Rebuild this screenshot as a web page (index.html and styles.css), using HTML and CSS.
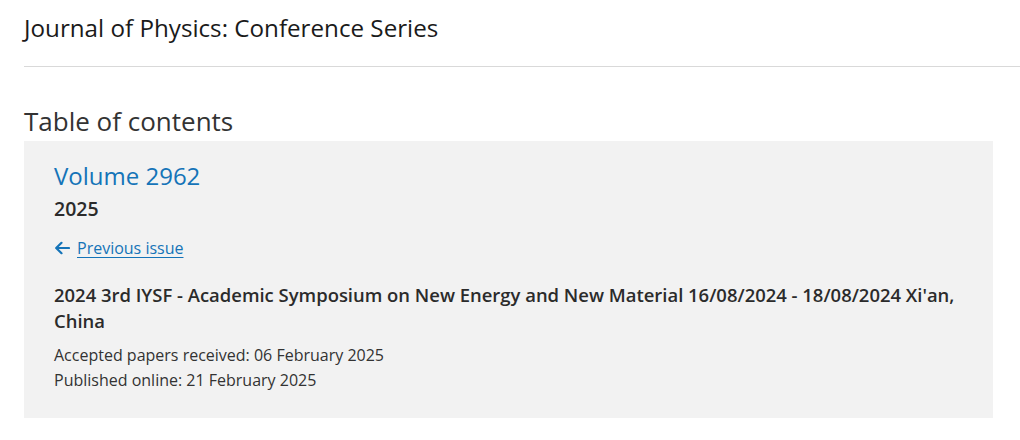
FILE: index.html
```html
<!DOCTYPE html>
<html lang="en">
<head>
<meta charset="utf-8">
<title>Journal of Physics: Conference Series</title>
<link rel="stylesheet" href="styles.css">
</head>
<body>
<header class="journal-header">
  <h1 class="journal-title">Journal of Physics: Conference Series</h1>
</header>
<main class="toc">
  <h2 class="toc-heading">Table of contents</h2>
  <section class="issue-box">
    <h3 class="volume">Volume 2962</h3>
    <p class="year">2025</p>
    <nav class="issue-nav">
      <svg class="arrow" width="16" height="14" viewBox="0 0 16 14" aria-hidden="true">
        <path d="M15 7H2.5M7.5 1.8L2.2 7l5.3 5.2" fill="none" stroke="#1574b8" stroke-width="2.2" stroke-linecap="round" stroke-linejoin="round"/>
      </svg>
      <a href="#" class="prev-link">Previous issue</a>
    </nav>
    <h4 class="conf-title">2024 3rd IYSF - Academic Symposium on New Energy and New Material 16/08/2024 - 18/08/2024 Xi'an, China</h4>
    <p class="meta">Accepted papers received: 06 February 2025<br>Published online: 21 February 2025</p>
  </section>
</main>
</body>
</html>
```
FILE: styles.css
```css
html, body {
  margin: 0;
  padding: 0;
  background: #ffffff;
}
body {
  font-family: "Open Sans", "Noto Sans", "Liberation Sans", sans-serif;
  color: #1a1a1a;
  width: 1020px;
  overflow: hidden;
}
.journal-header {
  margin-left: 24px;
  border-bottom: 1px solid #d9d9d9;
  height: 67px;
  box-sizing: border-box;
}
.journal-title {
  margin: 0;
  padding-top: 11px;
  font-weight: 400;
  font-size: 24.2px;
  line-height: 34px;
  color: #1a1a1a;
}
.toc {
  padding: 0 27px 0 24px;
}
.toc-heading {
  margin: 34px 0 0;
  font-weight: 400;
  font-size: 26px;
  line-height: 40px;
  color: #333333;
  height: 40px;
}
.issue-box {
  background: #f2f2f2;
  padding: 18px 30px 25px 30px;
}
.volume {
  margin: 0;
  font-weight: 400;
  font-size: 24px;
  line-height: 34px;
  color: #1574b8;
}
.year {
  margin: 2px 0 0;
  font-weight: 600;
  font-size: 19.5px;
  line-height: 28px;
  color: #2b2b2b;
}
.issue-nav {
  display: flex;
  align-items: center;
  gap: 7px;
  margin-top: 12px;
  height: 26px;
}
.arrow { display: block; }
.prev-link {
  font-size: 16px;
  line-height: 26px;
  color: #1574b8;
  text-decoration: underline;
  text-underline-offset: 3px;
}
.conf-title {
  margin: 21px 0 0;
  font-weight: 600;
  font-size: 18.45px;
  line-height: 26px;
  color: #2b2b2b;
}
.meta {
  margin: 9px 0 0;
  font-size: 16px;
  line-height: 25px;
  color: #333333;
}
```
